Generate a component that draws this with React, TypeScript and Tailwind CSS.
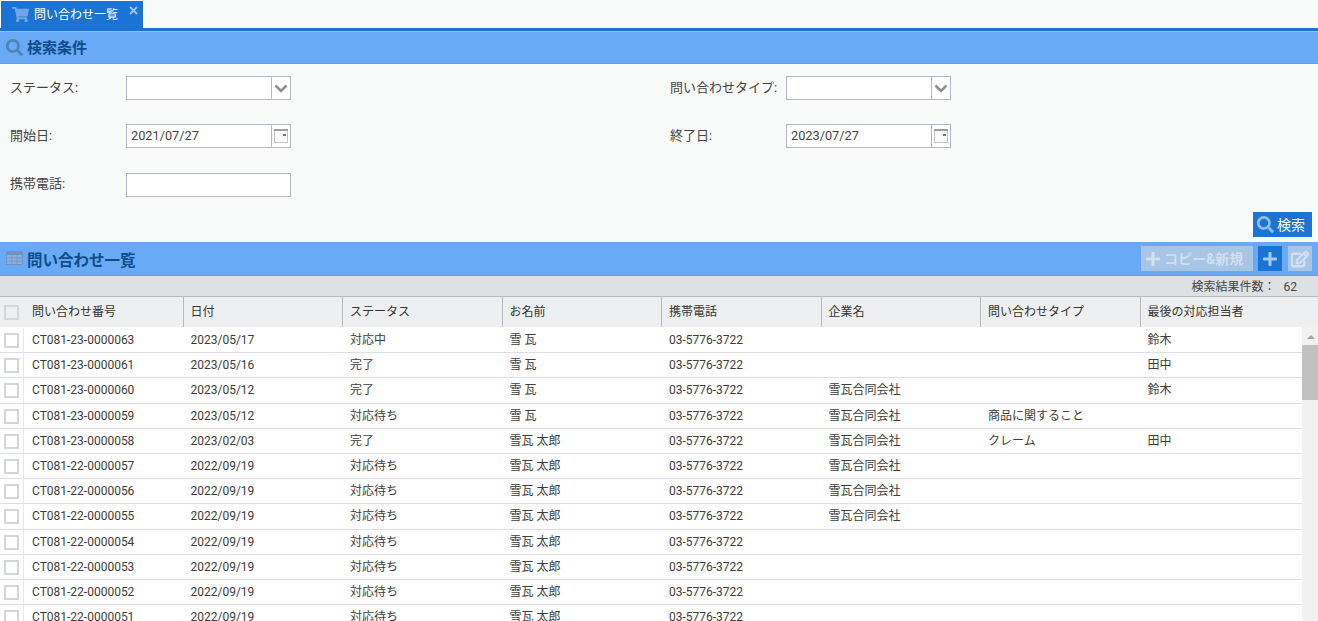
import { FaShoppingCart, FaSearch, FaPlus, FaRegEdit } from "react-icons/fa";

const FONT = "font-['Roboto','Noto_Sans_CJK_JP',sans-serif]";

const COLUMNS = ["問い合わせ番号", "日付", "ステータス", "お名前", "携帯電話", "企業名", "問い合わせタイプ", "最後の対応担当者"];

const ROWS = [
  ["CT081-23-0000063", "2023/05/17", "対応中", "雪 瓦", "03-5776-3722", "", "", "鈴木"],
  ["CT081-23-0000061", "2023/05/16", "完了", "雪 瓦", "03-5776-3722", "", "", "田中"],
  ["CT081-23-0000060", "2023/05/12", "完了", "雪 瓦", "03-5776-3722", "雪瓦合同会社", "", "鈴木"],
  ["CT081-23-0000059", "2023/05/12", "対応待ち", "雪 瓦", "03-5776-3722", "雪瓦合同会社", "商品に関すること", ""],
  ["CT081-23-0000058", "2023/02/03", "完了", "雪瓦 太郎", "03-5776-3722", "雪瓦合同会社", "クレーム", "田中"],
  ["CT081-22-0000057", "2022/09/19", "対応待ち", "雪瓦 太郎", "03-5776-3722", "雪瓦合同会社", "", ""],
  ["CT081-22-0000056", "2022/09/19", "対応待ち", "雪瓦 太郎", "03-5776-3722", "雪瓦合同会社", "", ""],
  ["CT081-22-0000055", "2022/09/19", "対応待ち", "雪瓦 太郎", "03-5776-3722", "雪瓦合同会社", "", ""],
  ["CT081-22-0000054", "2022/09/19", "対応待ち", "雪瓦 太郎", "03-5776-3722", "", "", ""],
  ["CT081-22-0000053", "2022/09/19", "対応待ち", "雪瓦 太郎", "03-5776-3722", "", "", ""],
  ["CT081-22-0000052", "2022/09/19", "対応待ち", "雪瓦 太郎", "03-5776-3722", "", "", ""],
  ["CT081-22-0000051", "2022/09/19", "対応待ち", "雪瓦 太郎", "03-5776-3722", "", "", ""],
];

function Chevron() {
  return (
    <svg width="14" height="9" viewBox="0 0 14 9">
      <path d="M1.5 1.5 7 7l5.5-5.5" fill="none" stroke="#8f8f8f" strokeWidth="2.6" />
    </svg>
  );
}

function CalendarIcon() {
  return (
    <svg width="14" height="14" viewBox="0 0 14 14">
      <rect x="0.5" y="0.5" width="13" height="13" fill="#fafafa" stroke="#c4c4c4" />
      <rect x="0" y="0" width="14" height="2" fill="#9e9e9e" />
      <rect x="9" y="5" width="3" height="2" fill="#777" />
    </svg>
  );
}

function CloseIcon() {
  return (
    <svg width="9" height="9" viewBox="0 0 9 9">
      <path d="M1 1l7 7M8 1 1 8" fill="none" stroke="#a3c4ec" strokeWidth="1.8" />
    </svg>
  );
}

function TableIcon() {
  return (
    <svg width="17" height="14" viewBox="0 0 17 14" className="mr-[4px] -mt-[2px]">
      <rect width="17" height="14" rx="1.5" fill="#6d93c4" />
      <path d="M1 4h4.5v2.5H1zM6.3 4h4.4v2.5H6.3zM11.5 4H16v2.5h-4.5zM1 7.3h4.5v2.5H1zM6.3 7.3h4.4v2.5H6.3zM11.5 7.3H16v2.5h-4.5zM1 10.6h4.5V13H1zM6.3 10.6h4.4V13H6.3zM11.5 10.6H16V13h-4.5z" fill="#8fafdc" />
    </svg>
  );
}

function Field({ label, value, kind }: { label: string; value?: string; kind?: "select" | "date" }) {
  return (
    <div className="flex items-center h-6">
      <label className="w-[116px] -mt-px text-[13px] text-[#444] leading-6 whitespace-nowrap">{label}</label>
      <div className="flex w-[165px] h-6 border border-[#b5b5cf] bg-white">
        <div className="flex-1 px-1 text-[12.75px] leading-[22px] text-[#444]">{value}</div>
        {kind && (
          <div className="flex w-[19px] items-center justify-center border-l border-[#b5b5cf]">
            {kind === "select" ? <Chevron /> : <CalendarIcon />}
          </div>
        )}
      </div>
    </div>
  );
}

function Checkbox() {
  return <span className="block w-[15px] h-[15px] border-2 border-[#d3d6da] bg-white" />;
}

export default function App() {
  return (
    <div className={`${FONT} w-[1318px] h-[621px] overflow-hidden bg-[#f8f9f9]`}>
      {/* tabs */}
      <div className="h-[31px] pl-px pt-px border-b-[3px] border-[#1b74d4]">
        <div className="relative flex items-center w-[142px] h-[27px] bg-[#1b74d4] pl-[11px]">
          <FaShoppingCart className="text-[#6fa6e6] text-[17px] mr-[5px]" />
          <span className="text-xs text-white">問い合わせ一覧</span>
          <span className="absolute left-[128px] top-[5px] flex">
            <CloseIcon />
          </span>
        </div>
      </div>

      {/* search */}
      <div className="flex items-center h-[33px] bg-[#69aaf6] border-t border-t-[#8dbdf5] border-b border-b-[#62a0ea] pl-[6px] pr-[6px]">
        <FaSearch className="text-[#4f82ba] text-[17px] w-[17px] mr-[4px]" />
        <h2 className="pt-px text-[15px] font-bold text-[#0f4c8a] leading-none">検索条件</h2>
      </div>
      <div className="relative h-[178px] bg-[#f8f9f9] pl-[10px] pt-3">
        <div className="grid grid-cols-[660px_1fr] gap-y-[24.4px]">
          <Field label="ステータス:" kind="select" />
          <Field label="問い合わせタイプ:" kind="select" />
          <Field label="開始日:" value="2021/07/27" kind="date" />
          <Field label="終了日:" value="2023/07/27" kind="date" />
          <Field label="携帯電話:" />
        </div>
        <button className="absolute right-[6px] bottom-[5px] flex items-center gap-[3px] w-[59px] h-[25px] bg-[#1b74d4] pl-[4px] text-sm text-white">
          <FaSearch className="text-[#8fbdf0] text-[17px]" />
          検索
        </button>
      </div>

      {/* list */}
      <div className="flex items-center h-[34px] bg-[#69aaf6] border-b border-b-[#62a0ea] pl-[6px] pr-[6px]">
        <TableIcon />
        <h2 className="pt-[6px] text-[15.5px] font-bold text-[#0f4c8a] leading-none">問い合わせ一覧</h2>
        <div className="ml-auto flex items-center">
          <button className="flex items-center gap-[3px] w-[112px] h-[25px] bg-[#a9c5e6] pl-[4px] pt-px text-sm font-bold text-[#d0dfef] whitespace-nowrap">
            <FaPlus className="text-[16px] text-[#d5e2f1]" />
            コピー&新規
          </button>
          <button className="flex items-center justify-center ml-[5px] w-6 h-[25px] bg-[#1b74d4]">
            <FaPlus className="text-[16px] text-[#a5c9f0]" />
          </button>
          <button className="flex items-center justify-center ml-[6px] w-6 h-[25px] bg-[#a9c5e6]">
            <FaRegEdit className="text-[18px] text-[#d5e2f1]" stroke="currentColor" strokeWidth={24} />
          </button>
        </div>
      </div>
      <div className="h-[21px] bg-[#dee1e4] border-b border-[#b4b9be] pr-[21px] text-right text-xs leading-[23px] text-[#444]">
        検索結果件数：<span className="ml-[8px]">62</span>
      </div>
      <div className="grid grid-cols-[24px_repeat(8,159.5px)] h-[30px] bg-[#eeeff1] text-xs text-[#333]">
        <div className="flex items-center pl-1">
          <span className="block w-[15px] h-[15px] border-2 border-[#d3d6da] bg-[#eeeff1]" />
        </div>
        {COLUMNS.map((c, i) => (
          <div key={c} className={`leading-[30px] ${i === 0 ? "pl-2" : "pl-[7px]"} ${i < 7 ? "border-r border-[#b4b9be]" : ""}`}>
            {c}
          </div>
        ))}
      </div>
      <div className="flex h-[294px] overflow-hidden bg-white">
        <div className="w-[1302px] shrink-0 pt-px">
          {ROWS.map((row) => (
            <div key={row[0]} className="grid grid-cols-[24px_repeat(8,159.5px)] h-[25.2px] border-b border-[#dcdfe3] text-xs text-[#3c3c3c]">
              <div className="flex items-center pl-1 border-r border-[#e6e8ea]">
                <Checkbox />
              </div>
              {row.map((cell, i) => (
                <div key={i} className={`leading-[25px] whitespace-nowrap ${i === 0 ? "pl-2" : "pl-[7px]"}`}>
                  {cell}
                </div>
              ))}
            </div>
          ))}
        </div>
        <div className="relative flex-1 bg-[#f1f1f1]">
          <span className="absolute left-[5px] top-[8px] w-0 h-0 border-x-[4px] border-x-transparent border-b-[4px] border-b-[#a3a3a3]" />
          <div className="mt-[18px] h-[55px] bg-[#c1c1c1]" />
        </div>
      </div>
    </div>
  );
}
